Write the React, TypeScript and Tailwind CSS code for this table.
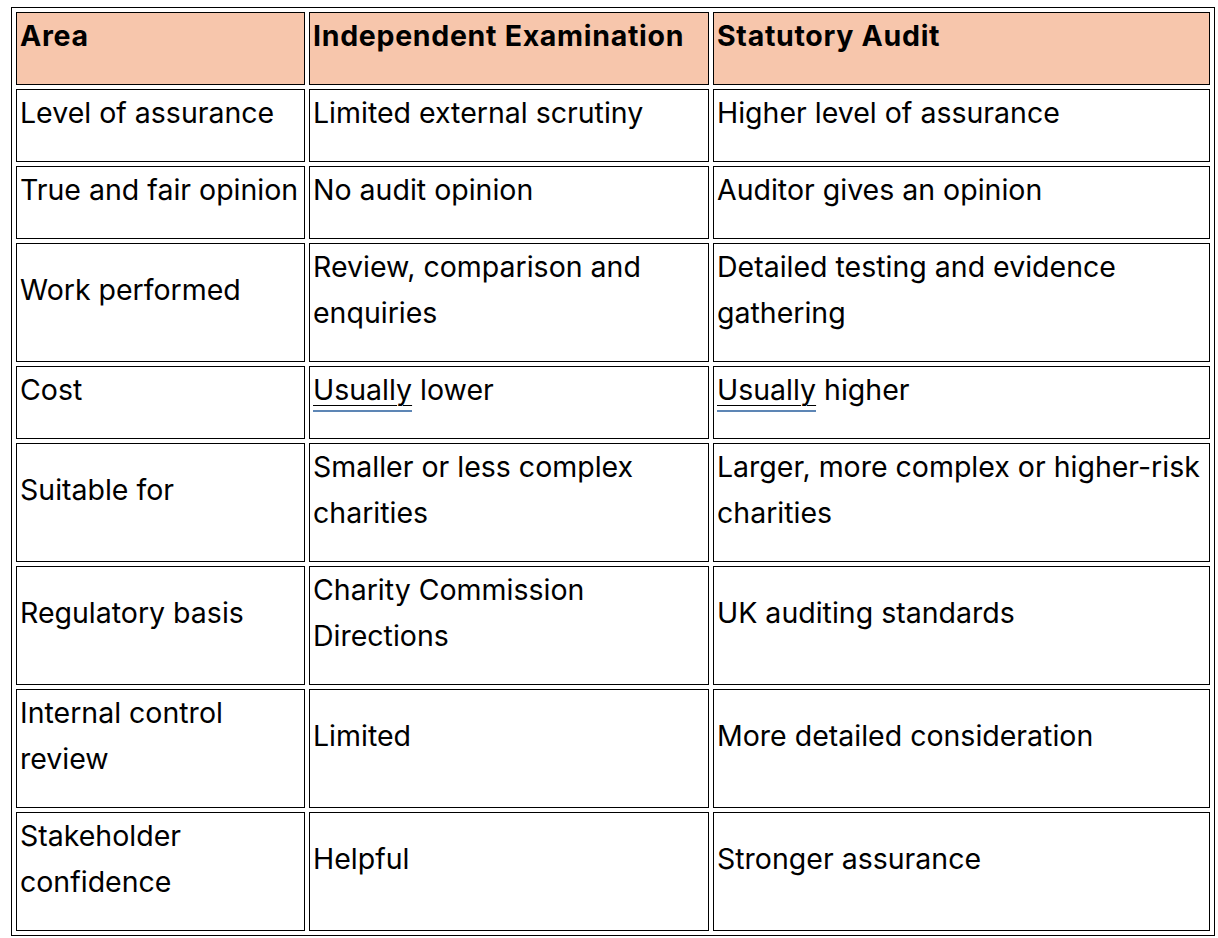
import React from "react";

interface Row {
  area: string;
  ie: React.ReactNode;
  audit: React.ReactNode;
}

// Word-style grammar mark under a word: dark underline plus a blue line below
const Marked = ({ children }: { children: string }) => (
  <span className="relative underline decoration-[1px] underline-offset-[5px]">
    {children}
    <span className="absolute left-0 right-0 top-[38px] h-[1.5px] bg-[#5d86b5]" />
  </span>
);

const rows: Row[] = [
  { area: "Level of assurance", ie: "Limited external scrutiny", audit: "Higher level of assurance" },
  { area: "True and fair opinion", ie: "No audit opinion", audit: "Auditor gives an opinion" },
  { area: "Work performed", ie: "Review, comparison and enquiries", audit: "Detailed testing and evidence gathering" },
  {
    area: "Cost",
    ie: (
      <>
        <Marked>Usually</Marked> lower
      </>
    ),
    audit: (
      <>
        <Marked>Usually</Marked> higher
      </>
    ),
  },
  { area: "Suitable for", ie: "Smaller or less complex charities", audit: "Larger, more complex or higher-risk charities" },
  { area: "Regulatory basis", ie: "Charity Commission Directions", audit: "UK auditing standards" },
  { area: "Internal control review", ie: "Limited", audit: "More detailed consideration" },
  { area: "Stakeholder confidence", ie: "Helpful", audit: "Stronger assurance" },
];

const Cell = ({ children, head }: { children: React.ReactNode; head?: boolean }) => (
  <td
    className={`border border-black px-[3px] py-0 align-middle ${
      head ? "bg-[#f7c6ac] font-bold tracking-[0.7px]" : "bg-white"
    }`}
  >
    <p className="mb-[25px] leading-[46px]">{children}</p>
  </td>
);

export default function App() {
  return (
    <div
      className="min-h-screen bg-white pl-[11px] pt-[7px] text-black"
      style={{ fontFamily: "Inter, 'Noto Sans', sans-serif" }}
    >
      <table className="table-fixed border-separate border-spacing-[4px] border border-black text-[28.5px] w-[1203px]">
        <colgroup>
          <col className="w-[289px]" />
          <col className="w-[400px]" />
          <col className="w-[497px]" />
        </colgroup>
        <thead>
          <tr>
            <Cell head>Area</Cell>
            <Cell head>Independent Examination</Cell>
            <Cell head>Statutory Audit</Cell>
          </tr>
        </thead>
        <tbody>
          {rows.map((r) => (
            <tr key={r.area}>
              <Cell>{r.area}</Cell>
              <Cell>{r.ie}</Cell>
              <Cell>{r.audit}</Cell>
            </tr>
          ))}
        </tbody>
      </table>
    </div>
  );
}
